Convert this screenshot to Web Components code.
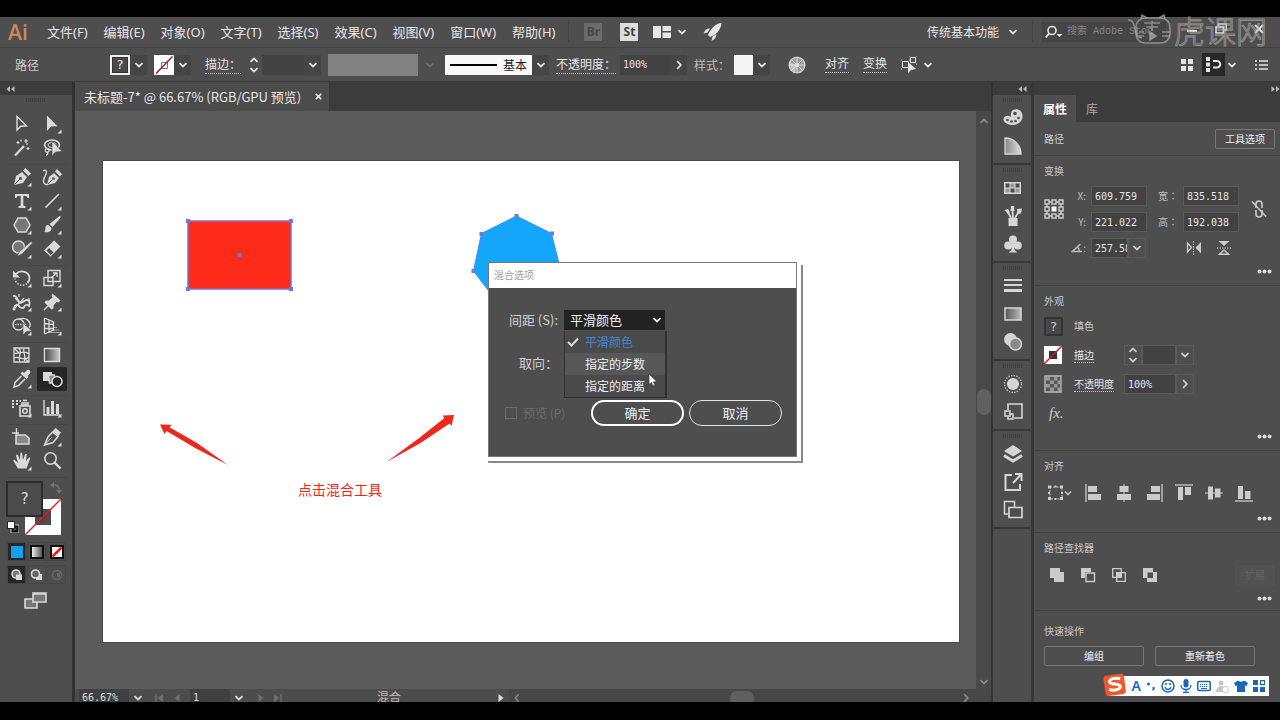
<!DOCTYPE html>
<html lang="zh-CN">
<head>
<meta charset="utf-8">
<title>未标题-7* - Illustrator</title>
<style>
html,body{margin:0;height:100%;background:#000}
body{font-family:"Noto Sans","Noto Sans CJK SC",sans-serif;color:#ddd}
</style>
</head>
<body>
<ai-app></ai-app>
<script>
const define=(name,css,html)=>{
  const t=document.createElement('template');
  t.innerHTML=`<style>*{box-sizing:border-box}button,input,select{font:inherit;color:inherit;margin:0;padding:0;border:0;background:none}a{color:inherit;text-decoration:none}.k{font-family:"Noto Sans CJK TC",sans-serif}${css}</style>${html}`;
  customElements.define(name,class extends HTMLElement{
    constructor(){super();this.attachShadow({mode:'open'}).append(t.content.cloneNode(true));}
  });
};

/* Icon artwork: width, height, markup. */
const tri='<path d="M20.500 20.500h-4l4-4z" fill="currentColor"/>';
const S='fill="none" stroke="currentColor"', F='fill="currentColor"';
const icons={
  chev:[10,6,`<path d="M1.500 1.200L5 4.500 8.500 1.200" ${S} stroke-width="1.800"/>`],
  chevUp:[10,6,`<path d="M1.500 4.800L5 1.500 8.500 4.800" ${S} stroke-width="1.800"/>`],
  chevR:[6,10,`<path d="M1.200 1.200L4.800 5 1.200 8.800" ${S} stroke-width="1.800"/>`],
  chevL:[6,10,`<path d="M4.800 1.200L1.200 5l3.600 3.800" ${S} stroke-width="1.400"/>`],
  dblL:[9,6,`<path d="M4 0v6L0.500 3zM8.500 0v6L5 3z" ${F}/>`],
  dblR:[9,6,`<path d="M0.500 0v6L4 3zM5 0v6l3.500-3z" ${F}/>`],
  grip:[20,4,`<path d="M0.500 0v4M2.500 0v4M4.500 0v4M6.500 0v4M8.500 0v4M10.500 0v4M12.500 0v4M14.500 0v4M16.500 0v4M18.500 0v4" ${S}/>`],
  dots:[15,5,`<g ${F}><circle cx="2.500" cy="2.500" r="2"/><circle cx="7.500" cy="2.500" r="2"/><circle cx="12.500" cy="2.500" r="2"/></g>`],
  arrange:[18,12,`<path d="M0 0h8v12H0zM9.500 0H18v5H9.500zM9.500 6.500H18V12H9.500z" ${F}/>`],
  rocket:[19,18,`<path d="M18.500 0C13 0 8 5 5 12l2 2C13 12 18 7 18.500 0zM7 5.500C4 5 2 7 0.500 10.500l4-1zM13.500 11c0 3-1.500 5-5 7l1-4.500z" ${F}/>`],
  search:[18,14,`<circle cx="7" cy="5.500" r="4" ${S} stroke-width="1.600"/><path d="M4 8.500L0.800 12.500" ${S} stroke-width="2"/><path d="M11.500 9h6l-3 3z" ${F}/>`],
  min:[12,12,`<path d="M1 8h10" ${S} stroke-width="2"/>`],
  restore:[12,12,`<path d="M3.500 3V1h8v6H9M1 4h7.500v6H1z" ${S} stroke-width="1.500"/>`],
  close:[10,10,`<path d="M1 1l8 8M9 1L1 9" ${S} stroke-width="1.800"/>`],
  x:[7,7,`<path d="M0.800 0.800l5.400 5.400M6.200 0.800L0.800 6.200" ${S} stroke-width="1.700"/>`],
  unknown:[20,20,`<path d="M1 1h18v18H1z" fill="#4a4a4a" stroke="#eee" stroke-width="2"/><path d="M2.500 2.500h15v15h-15z" fill="none" stroke="#333"/>`],
  none:[20,20,`<path d="M0 0h20v20H0z" fill="#fff"/><path d="M7.500 7.500h6v6h-6z" fill="none" stroke="#777"/><path d="M2 18.500L18.500 1.500" stroke="#b3202c" stroke-width="1.600"/>`],
  noneThick:[18,18,`<path d="M0 0h18v18H0z" fill="#fff"/><path d="M5 5h8v8H5z" fill="#333"/><path d="M0 18L18 0" stroke="#d01c26" stroke-width="1.500"/>`],
  wheel:[18,18,`<circle cx="9" cy="9" r="7.800" fill="#999" stroke="#ccc" stroke-width="1.500"/><path d="M9 1v16M1 9h16M3.300 3.300l11.400 11.400M14.700 3.300L3.300 14.700" stroke="#ddd"/><circle cx="9" cy="9" r="2" fill="#ddd"/><path d="M9 9L2 6A8 8 0 0 0 7 16z" fill="#ddd" opacity=".6"/>`],
  isolate:[18,18,`<path d="M1.500 5.500h6v6h-6zM9.500 1.500h5v5h-5zM0 4h1M8 4h2M0 13h1M8 0h1M15 0h1M15 8h1" ${S}/><path d="M7 6v11l3-3 5-1z" ${F}/>`],
  grid4:[13,12,`<path d="M0 0h5v5H0zM7 0h5v5H7zM0 7h5v5H0zM7 7h5v5H7z" ${F}/>`],
  snap:[16,15,`<path d="M0 0h4v4H0zM0 5.500h4v4H0zM0 11h4v4H0z" ${F}/><path d="M7 4h4a3 3 0 0 1 0 6.500H7" ${S} stroke-width="2"/>`],
  list:[13,10,`<path d="M0 1h2M0 5h2M0 9h2M4 1h9M4 5h9M4 9h9" ${S} stroke-width="1.400"/>`],
  /* tools */
  select:[22,22,`<path d="M6 3.500v13.500l3.800-3.800 5.700-.4z" ${S} stroke-width="1.400"/>`],
  direct:[22,22,`<path d="M6 2.500v15.500l4-4.500 6.500-.3z" ${F}/>${tri}`],
  wand:[22,22,`<path d="M4 18.500L13 9" ${S} stroke-width="2.200"/><path d="M15 2v4M13 4h4M7 4v3M5.500 5.500h3M17 10v3M15.500 11.500h3M10 2.500v2M15 7h2" ${S} stroke-width="1.200"/>`],
  lasso:[22,22,`<ellipse cx="11" cy="8" rx="7.500" ry="5" ${S} stroke-width="1.600"/><ellipse cx="11" cy="8" rx="4" ry="2.500" ${S}/><path d="M5 12c-2 1 0 4 2 3s1-4-1-3M7 15c0 2-1 3-2 3" ${S} stroke-width="1.300"/><path d="M11 4v15l3.500-4 6.500-.5z" fill="currentColor" stroke="#4e4e4e" stroke-width=".6"/>`],
  pen:[22,22,`<path d="M3 19L5 10l6-4 5 5-4 6zM12 4.500L14.500 2 20 7.500 17.500 10z" ${F}/><path d="M3.500 18.500l5.500-5.500" stroke="#4e4e4e"/><circle cx="9.500" cy="12.500" r="1.400" fill="#4e4e4e"/>${tri}`],
  curve:[22,22,`<path d="M6 19l2-8 5-4 5 5-4 5zM14 5.500L16 3l5 5-2 2.500z" ${F}/><path d="M6.500 18.500L12 13" stroke="#4e4e4e"/><circle cx="12.500" cy="12.500" r="1.300" fill="#4e4e4e"/><path d="M2 5c3-2 4 0 3 3s-4 6-2 9c1 2 3 2 4 1" ${S} stroke-width="1.400"/>`],
  type:[22,22,`<path d="M4 4h14v4h-1.500L15.500 6H12.300v9.500l2.200.7V18h-7v-1.800l2.200-.7V6H6.500L5.500 8H4z" ${F}/>${tri}`],
  line:[22,22,`<path d="M4.500 17.500L18 4" ${S} stroke-width="1.700"/>${tri}`],
  poly:[22,22,`<path d="M3 11l4-7h8l4 7-4 7H7z" fill="#777" stroke="currentColor" stroke-width="1.500"/>${tri}`],
  brush:[22,22,`<path d="M18.500 2c2 0 1 2 0 3l-7 8-3-3z" ${F}/><path d="M7.500 11l3 3c0 3-2 5-7.500 4 2-1 1-3 1.500-5s2-2 3-2z" ${F}/>${tri}`],
  shaper:[22,22,`<circle cx="7.500" cy="9" r="6" fill="#777" stroke="currentColor" stroke-width="1.500"/><path d="M20 3.500l1.500 1.500L11 16l-5 2.500L8.500 13.500z" fill="currentColor" stroke="#4e4e4e" stroke-width=".6"/>${tri}`],
  eraser:[22,22,`<path d="M3 12.500L13 2.500l6.500 6L9.500 18.500z" ${F}/><path d="M5.500 12.500L8 10l4.500 4.500L9.500 17z" fill="#4e4e4e"/>${tri}`],
  rotate:[22,22,`<path d="M5 7c5-5 13-2 13.500 4a7 7 0 0 1-2 5" ${S} stroke-width="1.800"/><path d="M16 16.500c-4 3.500-11 2-12-5" ${S} stroke-width="1.500" stroke-dasharray="1.500 1.500"/><path d="M2 3.500v7h7z" ${F}/>${tri}`],
  scale:[22,22,`<path d="M7 3.500h12v11H7zM3 10.500h9v8H3z" ${S} stroke-width="1.400"/><path d="M10 11l5-4.500M12 6h4v4" ${S} stroke-width="1.300"/>`+tri],
  width:[22,22,`<path d="M2 5c4-1 4 3 6 6s5-2 8-2c3 0 3 4 2 6-2-2-4-1-5 1s-4 1-5-1-4-2-5 2" ${S} stroke-width="1.800"/><path d="M3 18L13 7M4 7l4 4M8 3v3M18 7v4" ${S} stroke-width="1.200"/><circle cx="3" cy="18" r="1.500" ${F}/>${tri}`],
  pin:[22,22,`<path d="M11.500 2.500l8 7-2 2-2-.5-3 3.500v3l-2 1-7-7 1.500-2h3l3.500-3-1-2z" ${F}/><path d="M8 14l-5 5" ${S} stroke-width="1.500"/>${tri}`],
  shapeb:[22,22,`<circle cx="7.500" cy="9.500" r="5.500" ${S} stroke-width="1.400"/><path d="M8 4.500c4-2 8-1 10 2s1 5 0 6" ${S} stroke-width="1.400"/><path d="M4 9.500h11" ${S} stroke-dasharray="1.500 1" stroke-width="1.500"/><path d="M12 8v12l3.500-3.500 5.500-.5z" fill="currentColor" stroke="#4e4e4e" stroke-width=".6"/>${tri}`],
  persp:[22,22,`<path d="M3.500 3v16M3.500 3l9 4v8l-9 4M8 5v12M3.500 8.500l9 1M3.500 13.500h9" ${S} stroke-width="1.300"/><path d="M13 12.500h3M11 15h7M7 17.500h13" ${S} opacity=".6"/>${tri}`],
  mesh:[22,22,`<path d="M3 4h15v14H3zM3 9c5 2 10-4 15 1M3 14c5-3 9 4 15-1M8 4c4 5-2 8 1 14M13 4c-2 4 3 8 0 14M3 4l5 5M18 18l-5-4" ${S} stroke-width="1.300"/>`],
  gradient:[22,22,`<defs><linearGradient id="g"><stop stop-color="#444"/><stop offset="1" stop-color="#ccc"/></linearGradient></defs><path d="M3.500 4.500h15v13h-15z" fill="url(#g)" stroke="currentColor" stroke-width="1.400"/>`],
  dropper:[22,22,`<path d="M13 5l2.500-2.500c2-2 5 1 3.500 3L16.500 8l1 1-2 2-6-5.500 2-2z" ${F}/><path d="M10.500 8L4 14.500 3 19l4.500-1.500L14 11" ${S} stroke-width="1.500"/>${tri}`],
  blend:[22,22,`<path d="M2 4h9v9H2z" ${F}/><path d="M7.500 7h6v8h-5z" fill="#888" stroke="currentColor" stroke-width="1.300"/><circle cx="16" cy="13.500" r="5" fill="#262626" stroke="currentColor" stroke-width="1.600"/>`],
  spray:[22,22,`<path d="M9 9h10v10H9zM11 6h6v2h-6zM12 3.500h4" ${S} stroke-width="1.600"/><circle cx="14" cy="14" r="2.300" ${S} stroke-width="1.500"/><path d="M1 4h2M1 7h2M1 10h2M5 4h2M5 7h2M8.500 4h1.500" ${S} stroke-width="1.800"/>${tri}`],
  graph:[22,22,`<path d="M3 3v15h16" ${S} stroke-width="1.400"/><path d="M5.500 10h3v7h-3zM10 4h3v13h-3zM15 7h3v10h-3z" ${F}/>${tri}`],
  artboard:[22,22,`<path d="M5.500 2v6.500M1 7h7" ${S} stroke-width="1.300"/><path d="M5 9h9.500l3.500 3v6H5z" fill="#888" stroke="currentColor" stroke-width="1.500"/>`],
  slice:[22,22,`<path d="M14.500 2L20 6.500l-2.500 3.500-6-4.500z" ${F}/><path d="M11.500 6l5.500 4.500-5 6L3.500 19l3.500-8z" ${S} stroke-width="1.500"/><path d="M4 18.500l6.500-7" ${S}/>${tri}`],
  hand:[22,22,`<path d="M7 18.500L2.500 11c-.5-1.500 1-1.500 2-.5L7 13 5 5.500c0-1.500 1.500-1.500 2 0L9 10l.3-6.500c.2-1.300 1.700-1.300 1.900 0L12 10l2-5.500c.7-1.200 2-.7 1.700.6L15 11l2.500-3c1-1 2-.2 1.500 1l-3.500 9.500z" ${F}/>${tri}`],
  zoom:[22,22,`<circle cx="9.500" cy="8.500" r="5.700" ${S} stroke-width="1.600"/><path d="M13.500 12.500l6 6" ${S} stroke-width="2.400"/>`],
  swap:[12,12,`<path d="M2 3c5-1 7 1 7 6" ${S} stroke-width="1.500"/><path d="M0 3l4-3v6zM6 8h6l-3 4z" ${F}/>`],
  defaults:[12,12,`<path d="M5.500 5.500h5v5h-5z" fill="none" stroke="#111" stroke-width="2.500"/><path d="M4 4h8v8H4z" fill="none" stroke="#ddd" stroke-width=".8"/><path d="M.500.500h7v7h-7z" fill="#fff" stroke="#222"/>`],
  strokebox:[36,36,`<path d="M0 0h36v36H0z" fill="#fff"/><path d="M10 10h16v16H10z" fill="#4c4c4c"/><path d="M10 26L26 10l-7 11-6 3z" fill="#7d2d2d"/><path d="M0 36L36 0" stroke="#d8242a" stroke-width="1.400"/>`],
  cBlue:[14,14,`<path d="M.500.500h13v13H.500z" fill="#12a0f2" stroke="#222"/>`],
  cGrad:[14,14,`<defs><linearGradient id="g"><stop stop-color="#fff"/><stop offset="1" stop-color="#444"/></linearGradient></defs><path d="M1 1h12v12H1z" fill="url(#g)" stroke="#111" stroke-width="2"/>`],
  cNone:[14,14,`<path d="M1 1h12v12H1z" fill="#fff" stroke="#111" stroke-width="2"/><path d="M2.500 11.500l9-9" stroke="#e0201c" stroke-width="2.500"/>`],
  mNorm:[14,12,`<circle cx="6" cy="5" r="4" fill="#777" stroke="currentColor" stroke-width="1.600"/><path d="M6 5.500h6V11H6z" ${F}/>`],
  mBack:[14,12,`<path d="M6 5h6v6H6z" ${F}/><circle cx="5.500" cy="5" r="4" fill="#666" stroke="currentColor" stroke-width="1.600"/>`],
  mIn:[14,12,`<circle cx="7" cy="6" r="4.500" fill="none" stroke="#686868" stroke-width="1.500"/><path d="M7 4h3v4H7z" fill="#686868"/>`],
  screen:[24,18,`<path d="M1 7h12v9H1z" fill="#777" stroke="currentColor" stroke-width="1.600"/><path d="M9 1h13v9H9z" fill="#777" stroke="currentColor" stroke-width="1.600"/><path d="M9 2h13" ${S} stroke-width="1.500"/>`],
  /* dock */
  palette:[20,20,`<path d="M10 2c5-2 9.500 1 9.500 6 0 6-5 9-10 9S0 14 .500 11 5 7 7 8.500 6.500 4 10 2z" ${F}/><g fill="#4e4e4e"><circle cx="4.500" cy="12" r="1.300"/><circle cx="8.500" cy="13.500" r="1.300"/><circle cx="12.500" cy="13" r="1.300"/><circle cx="15.500" cy="10" r="1.300"/><circle cx="12" cy="5.500" r="1.800"/></g>`],
  guide:[20,20,`<defs><linearGradient id="g" x1="1" y1="0" x2="0" y2="0"><stop stop-color="#ddd"/><stop offset="1" stop-color="#888"/></linearGradient></defs><path d="M2 2c9 0 16 7 16 16H2z" fill="url(#g)" stroke="currentColor" stroke-width="1.300"/>`],
  swatches:[20,20,`<path d="M1 4h17v12H1z" ${F}/><path d="M2.500 5.500h4v4h-4zM12.500 5.500h4v4h-4zM7.500 10.500h4v4h-4z" fill="#4e4e4e"/><path d="M7.500 5.500h4v4h-4zM2.500 10.500h4v4h-4zM12.500 10.500h4v4h-4z" fill="#999"/>`],
  brushes:[20,20,`<path d="M5.500 12h9v8h-9z" ${F}/><path d="M8 12L4 4M10 12l-.500-8M12 12l4-7" ${S} stroke-width="1.800"/><path d="M1.500 4l3.500-1 2 3-2 2zM8 0h3l.5 5H7.500zM14 3l5-.5-1 5-3.500.5z" ${F}/>`],
  club:[20,20,`<circle cx="10" cy="5.500" r="4" ${F}/><circle cx="5.200" cy="11.500" r="4" ${F}/><circle cx="14.800" cy="11.500" r="4" ${F}/><path d="M9.200 7h1.600l.7 9 3 2.500h-9l3-2.500z" ${F}/>`],
  strokes:[20,20,`<path d="M1 4h18M1 9h18" ${S} stroke-width="2"/><path d="M1 14.500h18" ${S} stroke-width="3"/>`],
  gradp:[20,20,`<defs><linearGradient id="g"><stop stop-color="#555"/><stop offset="1" stop-color="#bbb"/></linearGradient></defs><path d="M2 4h16v12H2z" fill="url(#g)" stroke="currentColor" stroke-width="1.500"/>`],
  transp:[20,20,`<circle cx="7.500" cy="7.500" r="6.500" ${F}/><circle cx="12.500" cy="12" r="6" fill="#8a8a8a" stroke="currentColor" stroke-width="1.500"/>`],
  appear:[20,20,`<circle cx="10" cy="10" r="6" ${F}/><circle cx="10" cy="10" r="8.500" ${S} stroke-width="1.300" stroke-dasharray="1.300 1.400"/>`],
  styles:[20,20,`<path d="M5 8V2h14v14h-8" ${S} stroke-width="1.600"/><path d="M2 9h5v5H2z" fill="#4e4e4e" stroke="currentColor" stroke-width="1.500"/><path d="M6 12h4v5H5v-3" ${S} stroke-width="1.500"/>`],
  layers:[20,20,`<path d="M10 1l9 6-9 5.500L1 7z" ${F}/><path d="M1 11.500l9 5.500 9-5.500" ${S} stroke-width="3"/>`],
  exportp:[20,20,`<path d="M9 3H2.500v15H17V12" ${S} stroke-width="2"/><path d="M10 11l8-8.500M12 2h6.500v7" ${S} stroke-width="2"/>`],
  boards:[20,20,`<path d="M5 14H1.500V1.500h10V7" ${S} stroke-width="1.500"/><path d="M6 7.500h13v10H6z" ${S} stroke-width="1.700"/>`],
  /* properties */
  refpt:[20,20,`<path d="M1 1h4v4H1zM8 1h4v4H8zM15 1h4v4h-4zM1 8h4v4H1zM15 8h4v4h-4zM1 15h4v4H1zM8 15h4v4H8zM15 15h4v4h-4zM5 3h3M12 3h3M5 17h3M12 17h3M3 5v3M3 12v3M17 5v3M17 12v3" ${S} stroke-width="1.400"/><path d="M7.500 7.500h5v5h-5z" fill="#fff"/>`],
  chain:[16,18,`<path d="M5 8V4a3 3 0 0 1 6 0v4M5 10v4a3 3 0 0 0 6 0v-4" ${S} stroke-width="1.600"/><path d="M1 1.500l14 15" ${S} stroke-width="1.500"/>`],
  angle:[12,10,`<path d="M9.500 1L1.500 8.500H11" ${S} stroke-width="1.600"/><path d="M6 4c2 1 2.500 2.500 2.500 4.500" ${S} stroke-width="1.300"/>`],
  flipH:[16,14,`<path d="M1.500 2v9l4-4.500z" ${S} stroke-width="1.300"/><path d="M15 1v11.500L9.500 6.700z" ${F}/><path d="M7.500 0v14" ${S} stroke-dasharray="1.500 1"/>`],
  flipV:[14,16,`<path d="M1.500 1h11L7 6z" ${F}/><path d="M2.500 14.300h9L7 10z" ${S} stroke-width="1.500"/><path d="M0 8h14" ${S} stroke-dasharray="1.500 1"/>`],
  fillq:[19,19,`<path d="M1 1h17v17H1z" fill="#474747" stroke="#2e2e2e" stroke-width="1.600"/>`],
  checker:[18,18,`<path d="M1 1h16v16H1z" fill="#555" stroke="#bbb" stroke-width="1.400"/><path d="M2 2h4v3.500H2zM10 2h3.500v3.500H10zM6 5.500h4V9H6zM13.500 5.500H16V9h-2.500zM2 9h4v3.500H2zM10 9h3.500v3.500H10zM6 12.500h4V16H6zM13.500 12.500H16V16h-2.500z" fill="#999"/>`],
  alignTo:[26,18,`<path d="M3 3h12v12H3z" ${S} stroke-dasharray="2 1.300"/><path d="M1 1.500h3v3H1zM7.500 1.500h2v2h-2zM13 1.500h3v3h-3zM1 13h3v3H1zM7.500 14h2v2h-2zM13 13h3v3h-3zM1 8h2v2H1zM14 8h2v2h-2z" ${F}/><path d="M18 7.500l3 3 3-3" ${S} stroke-width="1.300"/>`],
  aL:[18,18,`<path d="M1 0v18" ${S} stroke-width="1.300"/><path d="M3 2h9v6H3zM3 10h13v6H3z" ${F}/>`],
  aC:[18,18,`<path d="M9 0v18" ${S}/><path d="M4.500 2h9v6h-9zM2 10h14v6H2z" ${F}/>`],
  aR:[18,18,`<path d="M17 0v18" ${S} stroke-width="1.300"/><path d="M6 2h9v6H6zM2 10h13v6H2z" ${F}/>`],
  aT:[18,18,`<path d="M0 1h18" ${S} stroke-width="1.300"/><path d="M3 3h5v13H3zM10 3h6v8h-6z" ${F}/>`],
  aM:[18,18,`<path d="M0 9h18" ${S}/><path d="M3 2.500h5v13H3zM10 4.500h5.500v9H10z" ${F}/>`],
  aB:[18,18,`<path d="M0 17h18" ${S} stroke-width="1.300"/><path d="M3 2h5v13H3zM10 7h5.500v8H10z" ${F}/>`],
  pUnite:[16,16,`<path d="M1 1h10v4h4v10H5v-4H1z" ${F}/>`],
  pMinus:[16,16,`<path d="M1 1h10v4H5v6H1z" ${F}/><path d="M6 6h8.500v8.500H6z" ${S} stroke-width="1.400"/>`],
  pInter:[16,16,`<path d="M1.700 1.700h8.600v8.600H1.700zM5.700 5.700h8.600v8.600H5.700z" ${S} stroke-width="1.300"/><path d="M5 5h6v6H5z" ${F}/>`],
  pExcl:[16,16,`<path fill-rule="evenodd" d="M1 1h10v4h4v10H5v-4H1zM5.500 5.500v5.500h5.500V5.500z" ${F}/>`],
  first:[9,8,`<path d="M1 0v8" ${S} stroke-width="1.500"/><path d="M8 0v8L2.500 4z" ${F}/>`],
  prev:[6,8,`<path d="M5.500 0v8L.500 4z" ${F}/>`],
  next:[6,8,`<path d="M.500 0v8l5-4z" ${F}/>`],
  last:[9,8,`<path d="M8 0v8" ${S} stroke-width="1.500"/><path d="M1 0v8l5.500-4z" ${F}/>`],
  tick:[12,10,`<path d="M1 5l3.500 3.500L11 1.500" ${S} stroke-width="2"/>`],
  cursor:[10,14,`<path d="M1 1v10.500l2.500-2 1.500 3.500 2-.8-1.500-3.400H9z" fill="#fff" stroke="#333" stroke-width=".7"/>`],
  /* input method bar */
  sogou:[24,24,`<g transform="rotate(-8 12 12)"><rect x="1.500" y="1.500" width="20.500" height="20.500" rx="3" fill="#f1592a"/><path d="M18 6.500c-4-2-11-1.500-11 1.700 0 3.500 10 2 10 5.800 0 3.500-7 4-11.500 1.500" fill="none" stroke="#fff" stroke-width="3"/></g>`],
  comma:[10,12,`<circle cx="2.500" cy="4" r="1.500" ${F}/><path d="M6.500 7h2.200c.3 2-.7 3.500-2.200 4z" ${F}/>`],
  smile:[14,14,`<circle cx="7" cy="7" r="6" ${S} stroke-width="1.500"/><path d="M4 8c1 3.300 5 3.300 6 0" ${S} stroke-width="1.300"/><path d="M5 4v2M9 4v2" ${S} stroke-width="1.500"/>`],
  mic:[12,14,`<rect x="3.500" y="0" width="5" height="8.500" rx="2.500" ${F}/><path d="M1 6c0 6 10 6 10 0M6 10v3M3 13.500h6" ${S} stroke-width="1.300"/>`],
  kbd:[14,12,`<rect x=".8" y="1.500" width="12.400" height="9" rx="1" ${S} stroke-width="1.500"/><path d="M3 4.500h8M3 6.500h8" ${S} stroke-dasharray="1.200 .8"/><path d="M4 8.500h6" ${S}/>`],
  user:[13,13,`<circle cx="5" cy="3" r="2.500" ${F}/><path d="M0 12c0-7 8-8 9-3v3z" ${F}/><circle cx="9.500" cy="9.500" r="3" fill="#fff" stroke="currentColor"/>`],
  shirt:[14,14,`<path d="M4 1.500c1 1.500 5 1.500 6 0l4 2.500-1.500 3L11 6.500V13H3V6.500L1.500 7 0 4z" ${F}/>`],
  apps:[12,12,`<path d="M0 0h5v5H0zM0 7h5v5H0zM7 7h5v5H7z" ${F}/><path d="M7.600.600h4v4h-4z" ${S} stroke-width="1.200"/>`],
  wmark:[46,34,`<g fill="none" stroke="currentColor" stroke-width="1.600"><path d="M0 7c5 0 6 4 7 9 1 6 3 9 7 9"/><rect x="8" y="5" width="34" height="25" rx="9"/><path d="M13 6l1-4 5 3M31 5l5-3 1 4M16 10h16M18 14h12M24 8v10M11 19h5M11 23h5M34 19h8M34 23h8"/><path d="M22 19l6 4-6 4z" fill="currentColor"/></g>`]
};
customElements.define('ai-icon',class extends HTMLElement{
  connectedCallback(){
    if(this.shadowRoot)return;
    const [w,h,m]=icons[this.getAttribute('name')];
    this.attachShadow({mode:'open'}).innerHTML=`<style>:host{display:block;flex:none;width:${w}px;height:${h}px}svg{display:block}</style><svg width="${w}" height="${h}" viewBox="0 0 ${w} ${h}" aria-hidden="true">${m}</svg>`;
  }
});
const ic=n=>`<ai-icon name="${n}"></ai-icon>`;
const btn=(n,l,c='')=>`<button type="button" class="${c}" aria-label="${l}">${ic(n)}</button>`;

define('menu-bar',`
:host{display:flex;align-items:center;height:30px;background:#4e4e4e;font-size:13px;color:#e6e6e6;position:relative}
.logo{width:39px;padding-left:8px;color:#c9885c;font:600 21px/30px "Open Sans",sans-serif;margin-right:8px}
nav{display:flex;gap:16px}
nav a{white-space:nowrap;line-height:30px}
.div{width:1px;height:20px;background:#444;margin:0 15px 0 13px}
button{display:flex;align-items:center;justify-content:center}
.chip{width:18px;height:18px;font:bold 12px/18px "Open Sans",sans-serif;background:#ddd;color:#444;margin-right:15px}
.chip.off{background:#6b6b6b;color:#484848;margin-right:18px}
.gap{margin-left:6px}.gap2{margin-left:16px}
.ws{margin-left:auto;gap:9px;font-size:12px}
.search{display:flex;align-items:center;height:20px;width:124px;padding-left:2px;gap:4px;background:#454545;font:10px/18px "Liberation Mono","Noto Sans CJK SC",monospace;border:1px solid #424242}
input{width:98px;min-width:0}input::placeholder{color:#858585;opacity:1}
.win{display:flex;gap:17px;padding:0 16px 6px 20px}
.far{margin-left:10px}
.ws + .div{margin:0 9px 0 14px}
`,`<span class="logo">Ai</span><nav><a href="#">文件(F)</a><a href="#">编辑(E)</a><a href="#">对象(O)</a><a href="#">文字(T)</a><a href="#">选择(S)</a><a href="#">效果(C)</a><a href="#">视图(V)</a><a href="#">窗口(W)</a><a href="#">帮助(H)</a></nav>
<span class="div"></span><button type="button" class="chip off">Br</button><button type="button" class="chip">St</button>
${btn('arrange','排列文档')}${btn('chev','排列选项','gap')}${btn('rocket','GPU 性能','gap2')}
<button type="button" class="ws">传统基本功能${ic('chev')}</button><span class="div"></span>
<label class="search">${ic('search')}<input type="search" placeholder="搜索 Adobe Stock" aria-label="搜索 Adobe Stock"></label>
<div class="win">${btn('min','最小化')}${btn('restore','还原')}${btn('close','关闭','far')}</div>`);

define('control-bar',`
:host{display:flex;align-items:center;height:34px;border-top:1px solid #424242;background:#4e4e4e;font-size:12px;white-space:nowrap;color:#e4e4e4}
.ctx{width:110px;padding-left:15px;color:#ccc}
.g{display:flex;align-items:center;height:20px;margin-right:7px}
.g.wide{margin-right:14px}
.g.last{margin-right:18px}
button{display:flex;align-items:center;justify-content:center;height:20px}
.c{width:17px;background:#454545}
.u{border-bottom:1px dotted #ddd;line-height:16px}
.q{position:relative}.q span{position:absolute;inset:0;text-align:center;font:13px/20px "DejaVu Sans Mono",monospace}
.step{flex-direction:column;gap:4px;width:16px;margin-left:5px}
input{width:42px;height:20px;background:#434343;padding-left:3px;font:10px/20px "DejaVu Sans Mono",monospace}
.op{width:50px;margin-left:4px}
.gray{width:90px;height:22px;background:#828282}
.off{color:#6a6a6a;background:none;margin-left:3px}
.brush{width:87px;background:#f8f8f8;color:#222;gap:6px}
.brush i{width:47px;height:2px;background:#000}
.white{width:19px;height:20px;background:#f4f4f4}
.dim{color:#bbb;margin-right:4px}
.links{display:flex;align-items:center;gap:14px;margin-left:19px}
.iso{margin-right:4px}
.end{margin-left:auto;display:flex;align-items:center;padding-right:12px}
.snap{width:23px;height:23px;background:#282828;margin:0 2px 0 8px}
.list{margin-left:18px}
`,`<span class="ctx">路径</span>
<div class="g"><button type="button" class="q" aria-label="填色">${ic('unknown')}<span>?</span></button>${btn('chev','填色选项','c')}</div>
<div class="g wide">${btn('none','描边颜色')}${btn('chev','描边选项','c')}</div>
<div class="g"><label class="u" for="sw">描边<span class="k">：</span></label><button type="button" class="step" aria-label="调整粗细">${ic('chevUp')}${ic('chev')}</button><input id="sw">${btn('chev','粗细列表','c')}</div>
<div class="g"><button type="button" class="gray" aria-label="变量宽度"></button>${btn('chev','宽度列表','c off')}</div>
<div class="g"><button type="button" class="brush"><i></i>基本</button>${btn('chev','画笔列表','c')}</div>
<div class="g"><label class="u" for="op">不透明度<span class="k">：</span></label><input id="op" class="op" value="100%">${btn('chevR','不透明度滑块','c')}</div>
<div class="g last"><span class="dim">样式<span class="k">：</span></span><button type="button" class="white" aria-label="图形样式"></button>${btn('chev','样式列表','c')}</div>
${btn('wheel','重新着色图稿')}<div class="links"><a href="#" class="u">对齐</a><a href="#" class="u">变换</a>
<div class="g">${btn('isolate','隔离选定对象','iso')}${btn('chev','隔离选项')}</div></div>
<div class="end">${btn('grid4','网格')}${btn('snap','对齐像素','snap')}${btn('chev','对齐选项')}${btn('list','面板菜单','list')}</div>`);

const tool=(n,l)=>btn(n,l,n==='blend'?'on':'');
define('tool-group',`:host{display:grid;grid-template-columns:30px 30px;border-bottom:1px solid #474747;padding-bottom:4px}`,`<slot></slot>`);
define('tool-panel',`
:host{display:flex;flex-direction:column;width:75px;background:#4e4e4e;border-right:3px solid #333;color:#dadada}
.head{height:13px;background:#3c3c3c;padding:4px 6px;color:#bbb}
.grip{padding:3px 0 0 26px;height:17px;color:#3c3c3c}
tool-group{margin-left:7px;width:60px}
button{display:flex;align-items:center;justify-content:center;height:24px;width:30px}
.on{background:#262626;border-radius:2px}
.fs{position:relative;height:60px;margin-left:6px}
.fill{position:absolute;left:0;top:3px;width:37px;height:36px;background:#4b4b4b;border:2px solid #2d2d2d;z-index:1;font:15px/32px "DejaVu Sans Mono",monospace}
.stroke{position:absolute;left:19px;top:21px;width:36px;height:36px}
.swap{position:absolute;left:44px;top:4px;width:12px;height:12px;color:#727272}
.def{position:absolute;left:1px;top:43px;width:12px;height:12px}
.row{display:flex;gap:1px;margin:4px 0 0 7px}
.row button{width:19px;height:19px;border:1px solid #464646}
.row .sel{background:#262626}
.screen{margin:5px 0 0 21px}
`,`<div class="head">${ic('dblL')}</div><div class="grip">${ic('grip')}</div>
<tool-group>${[['select','选择'],['direct','直接选择'],['wand','魔棒'],['lasso','套索']].map(a=>tool(...a)).join('')}</tool-group>
<tool-group>${[['pen','钢笔'],['curve','曲率'],['type','文字'],['line','直线段'],['poly','多边形'],['brush','画笔'],['shaper','Shaper'],['eraser','橡皮擦']].map(a=>tool(...a)).join('')}</tool-group>
<tool-group>${[['rotate','旋转'],['scale','比例缩放'],['width','宽度'],['pin','操控变形'],['shapeb','形状生成器'],['persp','透视网格']].map(a=>tool(...a)).join('')}</tool-group>
<tool-group>${[['mesh','网格'],['gradient','渐变'],['dropper','吸管'],['blend','混合']].map(a=>tool(...a)).join('')}</tool-group>
<tool-group>${[['spray','符号喷枪'],['graph','柱形图']].map(a=>tool(...a)).join('')}</tool-group>
<tool-group>${[['artboard','画板'],['slice','切片'],['hand','抓手'],['zoom','缩放']].map(a=>tool(...a)).join('')}</tool-group>
<div class="fs"><button type="button" class="fill">?</button>${btn('strokebox','描边','stroke')}${btn('swap','互换','swap')}${btn('defaults','默认','def')}</div>
<div class="row">${btn('cBlue','颜色','sel')}${btn('cGrad','渐变')}${btn('cNone','无')}</div>
<div class="row">${btn('mNorm','正常绘图','sel')}${btn('mBack','背面绘图')}${btn('mIn','内部绘图')}</div>
${btn('screen','更改屏幕模式','screen')}`);

define('blend-dialog',`
:host{display:block;position:absolute;width:309px;z-index:1;color:#d0d0d0;font:13px/26px "Noto Sans CJK SC",sans-serif}
.back{position:absolute;inset:3px -6px -6px 0;background:#fff;border:solid #888;border-width:0 2px 2px 0;z-index:-1;border-radius:1px}
section{background:#4e4e4e;border:1px solid #777}
h2{margin:0;height:25px;background:#fff;color:#a0a0a0;font:10px/24px "Noto Sans CJK SC",sans-serif;padding-left:5px}
form{padding:19px 15px 30px;display:grid;row-gap:17px}
.row{display:grid;grid-template-columns:54px auto;column-gap:6px;align-items:center;position:relative;white-space:nowrap}
.row>label,.row>span{text-align:right}
.sel{display:flex;align-items:center;width:101px;height:20px;background:#222;color:#f2f2f2;position:relative}
select{appearance:none;width:100%;height:20px;line-height:18px;padding-left:6px}
select option{color:#222}
.sel ai-icon{position:absolute;right:3px;top:7px}
.pop{position:absolute;left:60px;top:24px;width:103px;background:#4a4a4a;border:solid #303030;border-width:0 2px 1px 1px;z-index:2;font-size:12px}
.pop button{display:flex;align-items:center;gap:6px;width:100%;height:22px;line-height:22px;padding-left:20px;color:#eee}
.pop .cur{padding-left:2px;color:#3f86d8}.cur ai-icon{color:#ddd}
.pop .hov{background:#575757}
.foot{display:flex;align-items:center;gap:5px;margin-top:7px}
.foot label{display:flex;align-items:center;gap:6px;color:#6c6c6c;width:82px;white-space:nowrap;font-size:12px}
.foot input{appearance:none;width:12px;height:12px;border:1px solid #6c6c6c;margin-left:1px}
.foot button{width:93px;height:26px;border:1px solid #e4e4e4;border-radius:13px;line-height:22px;color:#eee}
.foot .ok{border:2px solid #fff}
.ptr{position:absolute;left:160px;top:111px;z-index:3}
`,`<div class="back"></div><section role="dialog" aria-label="混合选项"><h2>混合选项</h2><form>
<div class="row"><label for="sp">间距 (S):</label><div class="sel"><select id="sp"><option>平滑颜色</option><option>指定的步数</option><option>指定的距离</option></select>${ic('chev')}</div>
<div class="pop"><button type="button" class="cur">${ic('tick')}平滑颜色</button><button type="button" class="hov">指定的步数</button><button type="button">指定的距离</button></div></div>
<div class="row"><span>取向<span class="k">：</span></span></div>
<div class="foot"><label><input type="checkbox" disabled>预览 (P)</label><button type="button" class="ok">确定</button><button type="button">取消</button></div>
</form></section><div class="ptr">${ic('cursor')}</div>`);

define('art-board',`
:host{display:block;position:relative;background:#fff;box-shadow:0 0 0 1px #4a4a4a;flex:1}
svg{position:absolute;left:0;top:0;overflow:visible}
p{position:absolute;left:195px;top:319px;margin:0;font-size:14px;line-height:20px;color:#f0261c;white-space:nowrap}
blend-dialog{left:385px;top:101px}
`,`<svg width="500" height="340" aria-hidden="true">
<rect x="85" y="60" width="103" height="68" fill="#ff2b1a" stroke="#8b6cc4" stroke-width="1.500"/>
<path d="M413.500 55l35 17.500 9.500 38-24.500 31h-39L370.500 110l8-37.500z" fill="#14a6fb" stroke="#3e8ff0"/>
<g fill="#5f7fd8"><path d="M83 58h4v4h-4zM186 58h4v4h-4zM83 126h4v4h-4zM186 126h4v4h-4zM134.500 92h4v4h-4zM411.500 53h4v4h-4zM447 70.500h4v4h-4zM376.500 71h4v4h-4zM368.500 108h4v4h-4z"/></g>
<g fill="#f0261c"><path d="M57 263.500l11.500.300-2 2.500L94 282l31 22-32-16.500-29.500-17.500-2 3zM351 254l-11.500.500 2 2.500-26 20.500-32 23.500 34-19 29-19.500 2 2.500z"/></g>
</svg><p>点击混合工具</p><blend-dialog></blend-dialog>`);

define('doc-area',`
:host{display:flex;flex-direction:column;flex:1;min-width:0;background:#5b5b5b;border-right:2px solid #333}
.tabs{display:flex;height:29px;background:#3c3c3c}
.tab{display:flex;align-items:center;gap:14px;height:29px;padding:0 7px 0 9px;background:#4c4c4c;border-right:1px solid #383838;font:13px/29px "Noto Sans CJK SC",sans-serif;color:#e6e6e6;white-space:nowrap}
.mid{flex:1;display:flex;min-height:0}
.pad{flex:1;display:flex;padding:50px 17px 47px 28px;min-width:0}
.vs{width:15px;background:#494949;display:flex;flex-direction:column;align-items:center;justify-content:space-between;padding:7px 0 4px;color:#888}
.vs i{width:14px;height:26px;border-radius:7px;background:#606060}
.status{display:flex;height:13px;overflow:hidden;background:#4c4c4c;align-items:flex-start;padding-left:4px;font:10px/18px "DejaVu Sans Mono","Noto Sans CJK SC",monospace}
input{height:18px;background:#404040;padding-left:3px;width:50px}
input.num{width:40px}
button{height:18px;width:17px;display:flex;align-items:center;justify-content:center;flex:none}
.tab button{width:7px}
.off{color:#6e6e6e}
.s2{margin-left:5px}
.mode{flex:0 0 206px;text-align:center;font-size:12px;color:#bbb}
.hs{flex:1;display:flex;justify-content:space-between;align-items:center;background:#474747;height:18px;padding:0 22px 0 5px;color:#888}
.hs i{width:24px;height:14px;border-radius:7px;background:#606060}
`,`<div class="tabs"><div class="tab">未标题-7* @ 66.67% (RGB/GPU 预览)${btn('x','关闭')}</div></div>
<div class="mid"><div class="pad"><art-board></art-board></div><div class="vs">${ic('chevUp')}<i></i>${ic('chev')}</div></div>
<div class="status"><input value="66.67%" aria-label="缩放">${btn('chev','缩放列表')}${btn('first','首项','off s2')}${btn('prev','上一项','off')}<input class="num s2" value="1" aria-label="画板">${btn('chev','画板列表')}${btn('next','下一项','off s2')}${btn('last','末项','off')}<span class="mode">混合</span>${btn('next','状态菜单')}<div class="hs">${ic('chevL')}<i></i>${ic('chevR')}</div></div>`);

define('dock-group',`:host{display:block;padding:9px 0 3px;border-bottom:2px solid #383838;position:relative}.grip{position:absolute;left:10px;top:3px;color:#404040}`,`<div class="grip">${ic('grip')}</div><slot></slot>`);
define('icon-dock',`
:host{display:block;width:41px;border-right:3px solid #383838;background:#4e4e4e;color:#d6d6d6}
.head{display:flex;justify-content:flex-end;height:13px;background:#3c3c3c;padding:4px 4px 0 0;color:#bbb}
button{display:flex;align-items:center;justify-content:center;height:28px;width:100%;padding-left:2px}
`,`<div class="head">${ic('dblL')}</div>`+[[['palette','颜色'],['guide','颜色参考']],[['swatches','色板'],['brushes','画笔'],['club','符号']],[['strokes','描边'],['gradp','渐变'],['transp','透明度']],[['appear','外观'],['styles','图形样式']],[['layers','图层'],['exportp','资源导出'],['boards','画板']]].map(g=>`<dock-group>${g.map(a=>btn(...a)).join('')}</dock-group>`).join(''));

define('prop-section',`
:host{display:block;padding:0 5px 0 10px;border-bottom:1px solid #424242;position:relative}
:host([last]){border:0;padding-top:5px}
h3{margin:0;font:10px/30px "Noto Sans CJK SC",sans-serif;color:#c8c8c8}
.more{display:flex;align-items:center;justify-content:flex-end;height:27px;padding-right:3px;margin-left:auto;width:24px;color:#ddd}
:host([tight]) .more{height:23px}
:host([last]) .more{display:none}
`,`<h3><slot name="title"></slot></h3><slot></slot><button type="button" class="more" aria-label="更多选项">${ic('dots')}</button>`);

define('props-panel',`
:host{display:block;width:246px;background:#4e4e4e;font:10px/20px "Noto Sans CJK SC",sans-serif;color:#ccc;white-space:nowrap}
.head{display:flex;justify-content:flex-end;height:13px;background:#3c3c3c;padding-top:4px;color:#bbb}
.tabs{display:flex;height:27px;background:#3c3c3c;font-size:12px}
.tabs button{padding:0 10px;width:42px;justify-content:flex-start;color:#aaa}
.tabs .on{background:#4e4e4e;color:#fff;font-weight:bold;padding:0 9px}
.top{display:flex;align-items:center;justify-content:space-between;height:34px;padding:0 5px 0 10px;border-bottom:1px solid #424242}
.b{height:20px;border:1px solid #777;border-radius:2px;line-height:16px;width:60px;color:#eee}
.tf{display:grid;grid-template-columns:20px 27px 56px 36px 56px 1fr;grid-auto-rows:20px;row-gap:6px;align-items:center}
.tf .ref{grid-row:1/3}.tf .chain{grid-row:1/3;grid-column:6;justify-self:center;padding-left:4px}
.tf label{text-align:right;padding-right:5px;color:#bbb;display:flex;justify-content:flex-end;align-items:center}
input{height:20px;min-width:0;width:100%;background:#424242;border:1px solid #5a5a5a;padding-left:3px;font:10px/18px "DejaVu Sans Mono",monospace;color:#e6e6e6}
button{display:flex;align-items:center;justify-content:center}
.ang{display:flex;height:20px}.ang input{width:37px}.ang button{width:18px;border:1px solid #5a5a5a}
.flip{grid-column:5;display:flex;gap:15px;padding-left:3px}
.ap{display:grid;grid-template-columns:30px 50px 66px;grid-auto-rows:20px;row-gap:9px;align-items:center;height:107px}
.l{justify-self:start}
.fx{font:italic 15px/20px "Liberation Serif",serif;padding-left:5px}
.u{border-bottom:1px dotted #ccc;line-height:14px;justify-self:start;color:#e6e6e6}
.q{position:relative;width:19px}.q span{position:absolute;inset:0;text-align:center;font:13px/19px "DejaVu Sans Mono",monospace}
.combo{display:flex;width:70px;height:20px}.combo button{width:18px;flex:none;border:1px solid #5a5a5a}
.combo .st{flex-direction:column;gap:4px}
.row{display:flex;align-items:center;height:24px}
.al{gap:12px;padding-left:3px}
.pf{gap:15px;padding-left:5px}
.ex{margin-left:auto;width:40px;height:21px;background:#525252;color:#646464}
.qa{display:grid;grid-template-columns:100px 100px;gap:11px}.qa .b{width:100px}
`,`<div class="head">${ic('dblR')}</div>
<div class="tabs"><button type="button" class="on">属性</button><button type="button">库</button></div>
<div class="top"><span>路径</span><button type="button" class="b">工具选项</button></div>
<prop-section><span slot="title">变换</span><div class="tf">${btn('refpt','参考点','ref')}<label for="x">X:</label><input id="x" value="609.759"><label for="w">宽<span class="k">：</span></label><input id="w" value="835.518">${btn('chain','约束宽高','chain')}
<label for="y">Y:</label><input id="y" value="221.022"><label for="h">高<span class="k">：</span></label><input id="h" value="192.038">
<span></span><label for="a" aria-label="角度">${ic('angle')}:</label><div class="ang"><input id="a" value="257.58">${btn('chev','角度列表')}</div><div class="flip">${btn('flipH','水平翻转')}${btn('flipV','垂直翻转')}</div></div></prop-section>
<prop-section><span slot="title">外观</span><div class="ap"><button type="button" class="q" aria-label="填色">${ic('fillq')}<span>?</span></button><span>填色</span><span></span>
${btn('noneThick','描边颜色','l')}<label class="u" for="s">描边</label><div class="combo"><button type="button" class="st" aria-label="调整">${ic('chevUp')}${ic('chev')}</button><input id="s">${btn('chev','列表')}</div>
${btn('checker','透明度','l')}<label class="u" for="o">不透明度</label><div class="combo"><input id="o" value="100%">${btn('chevR','滑块')}</div>
<a href="#" class="fx">fx.</a></div></prop-section>
<prop-section><span slot="title">对齐</span><div class="row al">${btn('alignTo','对齐到')}${[['aL','左'],['aC','水平居中'],['aR','右'],['aT','顶'],['aM','垂直居中'],['aB','底']].map(a=>btn(...a)).join('')}</div></prop-section>
<prop-section tight><span slot="title">路径查找器</span><div class="row pf">${[['pUnite','联集'],['pMinus','减去顶层'],['pInter','交集'],['pExcl','差集']].map(a=>btn(...a)).join('')}<button type="button" class="ex" disabled>扩展</button></div></prop-section>
<prop-section last><span slot="title">快速操作</span><div class="qa"><button type="button" class="b">编组</button><button type="button" class="b">重新着色</button></div></prop-section>`);

define('ime-bar',`
:host{display:flex;align-items:center;gap:5px;height:20px;background:#fff;color:#1a66bb;padding-right:4px;font:600 14px/20px "Noto Sans",sans-serif}
.s{width:24px;margin:-3px 0 0 -6px}
.u{color:#c3c6d2}
`,`<span class="s">${ic('sogou')}</span><span>A</span>${ic('comma')}${ic('smile')}${ic('mic')}${ic('kbd')}<span class="u">${ic('user')}</span>${ic('shirt')}${ic('apps')}`);

define('water-mark',`
:host{display:flex;align-items:center;color:rgba(170,170,170,.7);pointer-events:none}
span{font:300 31px/34px "Noto Sans CJK SC",sans-serif;color:transparent;-webkit-text-stroke:1px rgba(170,170,170,.7)}
`,`${ic('wmark')}<span>虎课网</span>`);

define('ai-app',`
:host{box-sizing:border-box;display:flex;flex-direction:column;min-height:100vh;padding:17px 0 18px;position:relative;background:#000;overflow:hidden}
main{flex:1;display:flex;border-top:1px solid #3a3a3a;min-height:0}
ime-bar{position:absolute;right:11px;bottom:24px}
water-mark{position:absolute;right:13px;top:13px}
`,`<menu-bar></menu-bar><control-bar></control-bar><main><tool-panel></tool-panel><doc-area></doc-area><icon-dock></icon-dock><props-panel></props-panel></main><ime-bar></ime-bar><water-mark></water-mark>`);
</script>
</body>
</html>
